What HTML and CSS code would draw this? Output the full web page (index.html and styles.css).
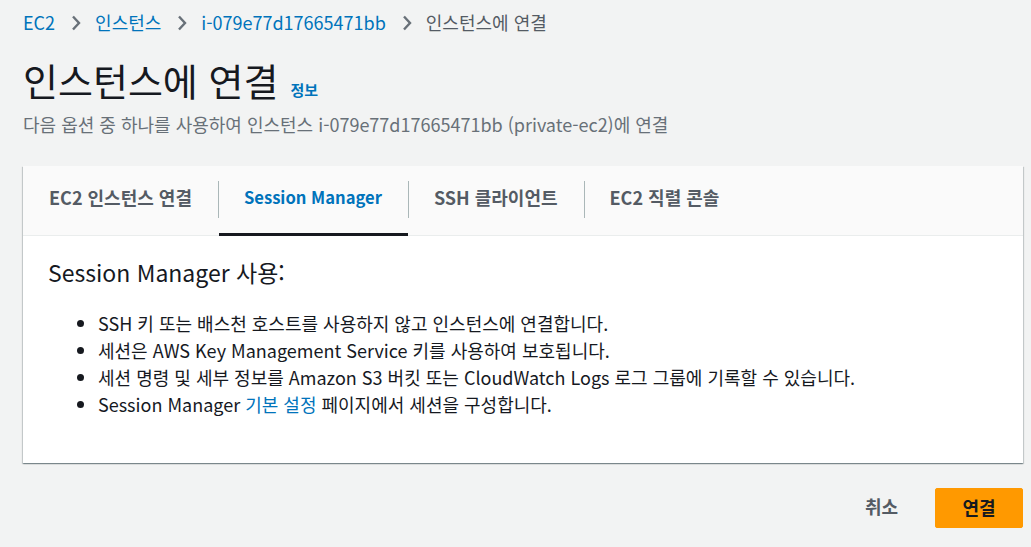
FILE: index.html
```html
<!DOCTYPE html>
<html lang="ko">
<head>
<meta charset="utf-8">
<link rel="stylesheet" href="styles.css">
</head>
<body>
<div class="page">
  <nav class="crumbs">
    <a class="crumb-link">EC2</a>
    <svg class="chev" width="10" height="16" viewBox="0 0 10 16"><path d="M2 1.5 L8 8 L2 14.5" fill="none" stroke="#687078" stroke-width="2.4"/></svg>
    <a class="crumb-link">인스턴스</a>
    <svg class="chev" width="10" height="16" viewBox="0 0 10 16"><path d="M2 1.5 L8 8 L2 14.5" fill="none" stroke="#687078" stroke-width="2.4"/></svg>
    <a class="crumb-link">i-079e77d17665471bb</a>
    <svg class="chev" width="10" height="16" viewBox="0 0 10 16"><path d="M2 1.5 L8 8 L2 14.5" fill="none" stroke="#687078" stroke-width="2.4"/></svg>
    <span class="crumb-current">인스턴스에 연결</span>
  </nav>
  <header class="head">
    <div class="title-row">
      <h1 class="title">인스턴스에 연결</h1>
      <a class="info">정보</a>
    </div>
    <p class="subtitle">다음 옵션 중 하나를 사용하여 인스턴스 i-079e77d17665471bb (private-ec2)에 연결</p>
  </header>
  <section class="card">
    <div class="tabs">
      <div class="tab">EC2 인스턴스 연결</div>
      <div class="tab active">Session Manager</div>
      <div class="tab">SSH 클라이언트</div>
      <div class="tab">EC2 직렬 콘솔</div>
    </div>
    <div class="card-body">
      <h2 class="section-title">Session Manager 사용:</h2>
      <ul class="list">
        <li>SSH 키 또는 배스천 호스트를 사용하지 않고 인스턴스에 연결합니다.</li>
        <li>세션은 AWS Key Management Service 키를 사용하여 보호됩니다.</li>
        <li>세션 명령 및 세부 정보를 Amazon S3 버킷 또는 CloudWatch Logs 로그 그룹에 기록할 수 있습니다.</li>
        <li>Session Manager <a class="link">기본 설정</a> 페이지에서 세션을 구성합니다.</li>
      </ul>
    </div>
  </section>
  <div class="actions">
    <button class="btn-cancel">취소</button>
    <button class="btn-primary">연결</button>
  </div>
</div>
</body>
</html>
```
FILE: styles.css
```css
* { box-sizing: border-box; }
html, body { margin: 0; padding: 0; }
body {
  background: #f2f3f3;
  font-family: "Noto Sans CJK KR", "Noto Sans", sans-serif;
  color: #16191f;
  width: 1031px;
  height: 547px;
  overflow: hidden;
}
.page {
  padding: 10px 8px 0 23px;
}
.crumbs {
  display: flex;
  align-items: center;
  font-size: 18px;
  height: 24px;
  line-height: 24px;
}
.crumb-link { color: #0073bb; }
.crumb-current { color: #545b64; }
.chev { margin: 1px 14px 0 16px; }
.head { margin-top: 22px; }
.title-row {
  display: flex;
  align-items: baseline;
}
.title {
  margin: 0;
  font-size: 38px;
  font-weight: 400;
  line-height: 48px;
}
.info {
  font-size: 15px;
  font-weight: 700;
  color: #0073bb;
  margin-left: 12px;
}
.subtitle {
  margin: 9px 0 0 0;
  font-size: 18px;
  color: #687078;
  line-height: 22px;
}
.card {
  margin-top: 31px;
  background: #fff;
  box-shadow: 0 1px 1px 0 rgba(0,28,36,0.3), 1px 1px 1px 0 rgba(0,28,36,0.15), -1px 1px 1px 0 rgba(0,28,36,0.15);
  height: 297px;
}
.tabs {
  display: flex;
  align-items: center;
  height: 70px;
  background: #fafafa;
  border-bottom: 1px solid #eaeded;
}
.tab {
  position: relative;
  height: 100%;
  display: flex;
  align-items: center;
  padding: 0 26px 7px;
  font-size: 18px;
  font-weight: 700;
  color: #545b64;
  line-height: 24px;
}
.tab + .tab::before {
  content: "";
  position: absolute;
  left: 0;
  top: 15px;
  height: 37px;
  border-left: 1px solid #aab7b8;
}
.tab.active {
  color: #0073bb;
  font-size: 16.6px;
}
.tab.active::after {
  content: "";
  position: absolute;
  left: 1px;
  right: 0;
  bottom: -1px;
  height: 3px;
  background: #16191f;
}
.card-body {
  padding: 21px 25px;
}
.section-title {
  margin: 0;
  font-size: 23px;
  font-weight: 400;
  line-height: 30px;
}
.list {
  margin: 23px 0 0 0;
  padding-left: 50px;
  font-size: 18px;
  line-height: 27px;
  color: #16191f;
}
.link { color: #0073bb; }
.actions {
  display: flex;
  justify-content: flex-end;
  align-items: center;
  margin-top: 25px;
  gap: 21px;
}
.btn-cancel {
  background: none;
  border: none;
  font-family: inherit;
  font-size: 18px;
  font-weight: 700;
  color: #545b64;
  padding: 4px 16px 8px;
}
.btn-primary {
  background: #ff9900;
  border: 1px solid #ff9900;
  border-radius: 2px;
  font-family: inherit;
  font-size: 18px;
  font-weight: 700;
  color: #16191f;
  width: 88px;
  height: 40px;
  padding-bottom: 3px;
}
```
